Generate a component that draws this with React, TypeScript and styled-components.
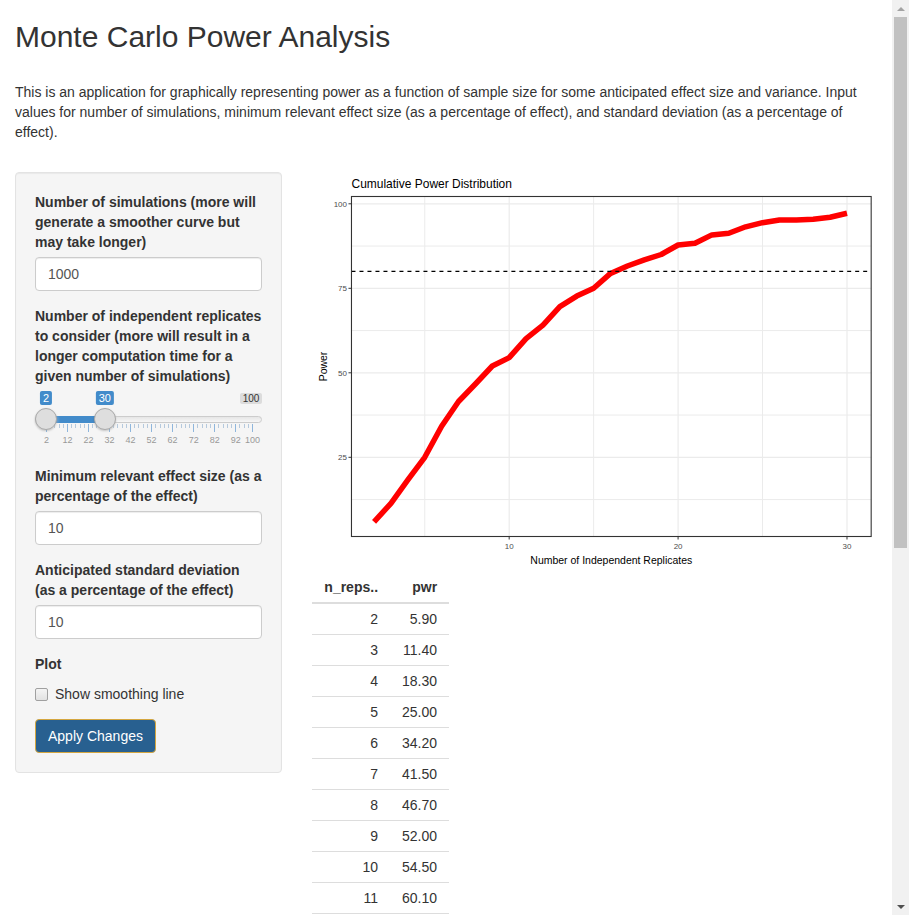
import React from "react";
import styled, { createGlobalStyle } from "styled-components";

const GlobalStyle = createGlobalStyle`
  html, body {
    margin: 0;
    padding: 0;
    background: #ffffff;
    overflow: hidden;
  }
  body {
    font-family: "Liberation Sans", Arial, sans-serif;
    font-size: 14px;
    line-height: 1.42857;
    color: #333333;
  }
  * {
    box-sizing: border-box;
  }
`;

const power: [number, number][] = [
  [2, 5.9], [3, 11.4], [4, 18.3], [5, 25.0], [6, 34.2], [7, 41.5], [8, 46.7],
  [9, 52.0], [10, 54.5], [11, 60.1], [12, 64.1], [13, 69.6], [14, 72.7],
  [15, 75.0], [16, 79.4], [17, 81.6], [18, 83.4], [19, 85.0], [20, 87.8],
  [21, 88.3], [22, 90.8], [23, 91.3], [24, 93.2], [25, 94.4], [26, 95.2],
  [27, 95.2], [28, 95.4], [29, 96.0], [30, 97.2],
];

/* ---------- window frame + scrollbar ---------- */

const Frame = styled.div`
  display: flex;
  height: 100vh;
  overflow: hidden;
`;

const Viewport = styled.div`
  flex: 1;
  min-width: 0;
  overflow: hidden;
`;

const ScrollBar = styled.div`
  width: 17px;
  flex: none;
  display: flex;
  flex-direction: column;
  background: #f1f1f1;
`;

const ScrollArrow = styled.div<{ $down?: boolean }>`
  height: 17px;
  flex: none;
  display: flex;
  align-items: center;
  justify-content: center;

  &::before {
    content: "";
    border-left: 4px solid transparent;
    border-right: 4px solid transparent;
    ${(p) => (p.$down ? "border-top: 4px solid #505050;" : "border-bottom: 4px solid #a3a3a3;")}
  }
`;

const ScrollTrack = styled.div`
  flex: 1;
  display: flex;
  flex-direction: column;
  padding: 0 2px;
`;

const ScrollThumb = styled.div`
  height: 531px;
  background: #c1c1c1;
`;

/* ---------- page layout ---------- */

const Page = styled.div`
  padding: 0 15px;
`;

const Title = styled.h2`
  margin: 20px 0 0;
  font-size: 30px;
  font-weight: 500;
  line-height: 33px;
  color: #333333;
`;

const Intro = styled.p`
  margin: 29px 0 30px;
  font-size: 14px;
  line-height: 20px;
`;

const Row = styled.div`
  display: grid;
  grid-template-columns: calc((100% + 30px) / 3 - 30px) 1fr;
  column-gap: 30px;
  align-items: start;
`;

const Well = styled.div`
  background: #f5f5f5;
  border: 1px solid #e3e3e3;
  border-radius: 4px;
  box-shadow: inset 0 1px 1px rgba(0, 0, 0, 0.05);
  padding: 19px;
  display: flex;
  flex-direction: column;
`;

const FormGroup = styled.div`
  display: flex;
  flex-direction: column;
  margin-bottom: 15px;
`;

const Label = styled.label`
  font-weight: 700;
  line-height: 20px;
  margin-bottom: 5px;
`;

const Input = styled.input`
  height: 34px;
  width: 100%;
  padding: 6px 12px;
  font-family: inherit;
  font-size: 14px;
  color: #555555;
  background: #ffffff;
  border: 1px solid #cccccc;
  border-radius: 4px;
  box-shadow: inset 0 1px 1px rgba(0, 0, 0, 0.075);
  outline: none;
`;

const CheckRow = styled.label`
  display: flex;
  align-items: center;
  gap: 7px;
  margin: 5px 0 15px;
  line-height: 20px;
  color: #333333;

  input {
    appearance: none;
    margin: 0;
    width: 13px;
    height: 13px;
    border: 1px solid #a0a0a0;
    border-radius: 2px;
    background: linear-gradient(to bottom, #f4f4f4, #e2e2e2);
  }
`;

const Button = styled.button`
  align-self: flex-start;
  height: 34px;
  padding: 6px 12px;
  font-family: inherit;
  font-size: 14px;
  line-height: 20px;
  color: #ffffff;
  background: #286090;
  border: 1px solid #d4a63f;
  border-radius: 4px;
  cursor: pointer;
`;

const Main = styled.div`
  display: flex;
  flex-direction: column;
`;

/* ---------- slider ---------- */

const SliderBox = styled.div`
  position: relative;
  height: 60px;
`;

const Bar = styled.div`
  position: absolute;
  left: 0;
  right: 0;
  top: 25px;
  height: 7px;
  border: 1px solid #cccccc;
  border-radius: 8px;
  background: linear-gradient(to bottom, #dddddd -50%, #ffffff 150%);
`;

const BarFill = styled.div`
  position: absolute;
  top: 25px;
  height: 7px;
  background: #428bca;
`;

const Handle = styled.div`
  position: absolute;
  top: 17px;
  width: 22px;
  height: 22px;
  margin-left: -11px;
  border-radius: 50%;
  background: #dedede;
  border: 1px solid #aaaaaa;
  box-shadow: 1px 1px 3px rgba(255, 255, 255, 0.3),
    0 1px 2px rgba(0, 0, 0, 0.25);
`;

const ValueTag = styled.span<{ $muted?: boolean }>`
  position: absolute;
  top: ${(p) => (p.$muted ? "2px" : "0")};
  padding: ${(p) => (p.$muted ? "0 3px" : "1px 3px")};
  font-size: ${(p) => (p.$muted ? "10px" : "11px")};
  line-height: ${(p) => (p.$muted ? "11px" : "12px")};
  color: ${(p) => (p.$muted ? "#333333" : "#ffffff")};
  background: ${(p) => (p.$muted ? "rgba(0,0,0,0.1)" : "#428bca")};
  border-radius: 2px;
  white-space: nowrap;
`;

const Tick = styled.span<{ $big?: boolean }>`
  position: absolute;
  top: 33px;
  width: 1px;
  height: ${(p) => (p.$big ? "8px" : "4px")};
  background: ${(p) => (p.$big ? "#8fb6dc" : "#b5c9dd")};
`;

const TickText = styled.span`
  position: absolute;
  top: 43px;
  font-size: 9px;
  line-height: 12px;
  color: #999999;
  transform: translateX(-50%);
  white-space: nowrap;
`;

function RangeSlider({ min, max, from, to }: { min: number; max: number; from: number; to: number }) {
  const pad = 11;
  const span = 228 - pad * 2;
  const pos = (v: number) => pad + ((v - min) / (max - min)) * span;
  const ticks: React.ReactNode[] = [];
  const majors: number[] = [];
  for (let v = min; v < max; v += 10) majors.push(v);
  majors.push(max);
  majors.forEach((v, i) => {
    const x = pos(v);
    ticks.push(<Tick key={"b" + v} $big style={{ left: x }} />);
    ticks.push(
      <TickText key={"t" + v} style={{ left: x + 0.5 }}>
        {v}
      </TickText>
    );
    const next = majors[i + 1];
    if (next !== undefined) {
      for (let s = v + 2; s < next; s += 2) {
        ticks.push(<Tick key={"s" + s} style={{ left: pos(s) }} />);
      }
    }
  });
  return (
    <SliderBox>
      <ValueTag $muted style={{ right: 0 }}>{max}</ValueTag>
      <ValueTag style={{ left: pos(from), transform: "translateX(-50%)" }}>{from}</ValueTag>
      <ValueTag style={{ left: pos(to), transform: "translateX(-50%)" }}>{to}</ValueTag>
      <Bar />
      <BarFill style={{ left: pos(from), width: pos(to) - pos(from) }} />
      {ticks}
      <Handle style={{ left: pos(from) }} />
      <Handle style={{ left: pos(to) }} />
    </SliderBox>
  );
}

/* ---------- plot ---------- */

const PlotWrap = styled.div`
  height: 400px;
  width: 100%;
`;

const PlotSvg = styled.svg`
  display: block;
  width: 100%;
  height: 100%;
  font-family: "Liberation Sans", Arial, sans-serif;
`;

function PowerPlot() {
  const L = 39.5;
  const R = 559.5;
  const T = 24.5;
  const B = 364.5;
  const sx = (v: number) => 28.3 + v * 16.9;
  const sy = (v: number) => 369.8 - v * 3.38;
  const path = power.map(([x, y], i) => `${i ? "L" : "M"}${sx(x).toFixed(1)},${sy(y).toFixed(1)}`).join(" ");
  const grid = "#ebebeb";
  return (
    <PlotWrap>
      <PlotSvg viewBox="0 0 565 400" preserveAspectRatio="none">
        <rect x={L} y={T} width={R - L} height={B - T} fill="#ffffff" />
        {[12.5, 37.5, 62.5, 87.5].map((v) => (
          <line key={"hm" + v} x1={L} x2={R} y1={sy(v)} y2={sy(v)} stroke={grid} strokeWidth={1} />
        ))}
        {[5, 15, 25].map((v) => (
          <line key={"vm" + v} y1={T} y2={B} x1={sx(v)} x2={sx(v)} stroke={grid} strokeWidth={1} />
        ))}
        {[25, 50, 75, 100].map((v) => (
          <line key={"hM" + v} x1={L} x2={R} y1={sy(v)} y2={sy(v)} stroke={grid} strokeWidth={1.2} />
        ))}
        {[10, 20, 30].map((v) => (
          <line key={"vM" + v} y1={T} y2={B} x1={sx(v)} x2={sx(v)} stroke={grid} strokeWidth={1.2} />
        ))}
        <path d={path} fill="none" stroke="#ff0000" strokeWidth={5.5} strokeLinejoin="round" strokeLinecap="butt" />
        <line x1={L} x2={R} y1={sy(80)} y2={sy(80)} stroke="#000000" strokeWidth={1.1} strokeDasharray="4 4" />
        <rect x={L} y={T} width={R - L} height={B - T} fill="none" stroke="#333333" strokeWidth={1.1} />
        {[25, 50, 75, 100].map((v) => (
          <g key={"yt" + v}>
            <line x1={L - 3} x2={L} y1={sy(v)} y2={sy(v)} stroke="#333333" strokeWidth={1} />
            <text x={L - 4.5} y={sy(v) + 2.8} fontSize={8} fill="#4d4d4d" textAnchor="end">
              {v}
            </text>
          </g>
        ))}
        {[10, 20, 30].map((v) => (
          <g key={"xt" + v}>
            <line y1={B} y2={B + 3} x1={sx(v)} x2={sx(v)} stroke="#333333" strokeWidth={1} />
            <text x={sx(v)} y={B + 13} fontSize={8} fill="#4d4d4d" textAnchor="middle">
              {v}
            </text>
          </g>
        ))}
        <text x={L} y={16} fontSize={12} fill="#000000">
          Cumulative Power Distribution
        </text>
        <text x={(L + R) / 2} y={392.5} fontSize={10.5} fill="#000000" textAnchor="middle">
          Number of Independent Replicates
        </text>
        <text
          x={0}
          y={0}
          fontSize={10.5}
          fill="#000000"
          textAnchor="middle"
          transform={`translate(15 ${(T + B) / 2}) rotate(-90)`}
        >
          Power
        </text>
      </PlotSvg>
    </PlotWrap>
  );
}

/* ---------- table ---------- */

const Table = styled.table`
  border-collapse: collapse;
  align-self: flex-start;
  font-size: 14px;

  th,
  td {
    padding: 5px 12px;
    line-height: 20px;
    text-align: right;
    color: #333333;
  }
  th {
    font-weight: 700;
    border-bottom: 2px solid #dddddd;
  }
  td {
    border-bottom: 1px solid #dddddd;
  }
`;

export default function App() {
  return (
    <>
      <GlobalStyle />
      <Frame>
        <Viewport>
          <Page>
            <Title>Monte Carlo Power Analysis</Title>
            <Intro>
              This is an application for graphically representing power as a function of sample size for some
              anticipated effect size and variance. Input values for number of simulations, minimum relevant effect
              size (as a percentage of effect), and standard deviation (as a percentage of effect).
            </Intro>
            <Row>
              <Well>
                <FormGroup>
                  <Label>Number of simulations (more will generate a smoother curve but may take longer)</Label>
                  <Input defaultValue="1000" />
                </FormGroup>
                <FormGroup>
                  <Label>
                    Number of independent replicates to consider (more will result in a longer computation time for
                    a given number of simulations)
                  </Label>
                  <RangeSlider min={2} max={100} from={2} to={30} />
                </FormGroup>
                <FormGroup>
                  <Label>Minimum relevant effect size (as a percentage of the effect)</Label>
                  <Input defaultValue="10" />
                </FormGroup>
                <FormGroup>
                  <Label>Anticipated standard deviation (as a percentage of the effect)</Label>
                  <Input defaultValue="10" />
                </FormGroup>
                <Label>Plot</Label>
                <CheckRow>
                  <input type="checkbox" />
                  Show smoothing line
                </CheckRow>
                <Button>Apply Changes</Button>
              </Well>
              <Main>
                <PowerPlot />
                <Table>
                  <thead>
                    <tr>
                      <th>n_reps..</th>
                      <th>pwr</th>
                    </tr>
                  </thead>
                  <tbody>
                    {power.map(([n, p]) => (
                      <tr key={n}>
                        <td>{n}</td>
                        <td>{p.toFixed(2)}</td>
                      </tr>
                    ))}
                  </tbody>
                </Table>
              </Main>
            </Row>
          </Page>
        </Viewport>
        <ScrollBar>
          <ScrollArrow />
          <ScrollTrack>
            <ScrollThumb />
          </ScrollTrack>
          <ScrollArrow $down />
        </ScrollBar>
      </Frame>
    </>
  );
}
